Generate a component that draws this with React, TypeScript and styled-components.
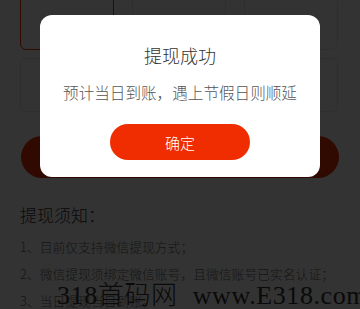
import React from 'react';
import styled, { createGlobalStyle } from 'styled-components';

const GlobalStyle = createGlobalStyle`
	html, body {
		margin: 0;
		padding: 0;
		background: #ffffff;
	}
	body {
		font-family: 'Noto Sans CJK SC', 'Noto Sans', sans-serif;
		font-weight: 300;
		overflow: hidden;
	}
`;

const Page = styled.div`
	position: relative;
	width: 360px;
	height: 309px;
	overflow: hidden;
	background: #ffffff;
	padding: 0 20px;
	box-sizing: border-box;
`;

const AmountGrid = styled.div`
	display: grid;
	grid-template-columns: repeat(3, 1fr);
	gap: 8px 18px;
	margin-top: -4px;
	padding-right: 2px;
`;

const AmountCard = styled.div<{ $active?: boolean }>`
	height: 54px;
	border: 1px solid ${(p) => (p.$active ? '#e8300a' : '#e6e6e6')};
	border-radius: 6px;
	box-sizing: border-box;
`;

const SubmitButton = styled.button`
	display: block;
	width: 318px;
	height: 42px;
	margin: 24px 0 0 1px;
	border: none;
	border-radius: 21px;
	background: #f03000;
`;

const NoticeTitle = styled.h3`
	margin: 25px 0 0;
	font-size: 17px;
	font-weight: 300;
	line-height: 24px;
	color: #333333;
`;

const NoticeList = styled.ol`
	list-style: none;
	margin: 6px 0 0;
	padding: 0;
`;

const NoticeItem = styled.li`
	font-size: 12.8px;
	line-height: 27px;
	color: #6a6a6a;
	white-space: nowrap;
`;

const Mask = styled.div`
	position: absolute;
	inset: 0;
	background: rgba(0, 0, 0, 0.8);
`;

const Dialog = styled.div`
	position: absolute;
	left: 40px;
	top: 15px;
	width: 280px;
	height: 162px;
	box-sizing: border-box;
	padding-top: 28px;
	background: #ffffff;
	border-radius: 12px;
	display: flex;
	flex-direction: column;
	align-items: center;
`;

const DialogTitle = styled.div`
	font-size: 18px;
	line-height: 24px;
	color: #333333;
`;

const DialogText = styled.div`
	margin-top: 14px;
	font-size: 15.6px;
	line-height: 22px;
	color: #555555;
	white-space: nowrap;
`;

const ConfirmButton = styled.button`
	margin-top: 21px;
	width: 140px;
	height: 36px;
	border: none;
	border-radius: 18px;
	background: #f02d00;
	color: #ffffff;
	font-family: 'Noto Sans CJK SC', sans-serif;
	font-weight: 300;
	font-size: 15px;
	padding: 0;
`;

const Watermark = styled.div`
	position: absolute;
	left: 57px;
	top: 283px;
	font-family: 'Liberation Serif', 'Noto Sans CJK SC', serif;
	font-size: 26px;
	font-weight: 300;
	line-height: 26px;
	letter-spacing: 0.6px;
	word-spacing: 8px;
	color: #0a0a0a;
	white-space: nowrap;
`;

const notices = [
	'1、目前仅支持微信提现方式；',
	'2、微信提现须绑定微信账号，且微信账号已实名认证；',
	'3、当日提现当日到账。',
];

export default function App() {
	return (
		<>
			<GlobalStyle />
			<Page>
				<AmountGrid>
					{[0, 1, 2, 3, 4, 5].map((i) => (
						<AmountCard key={i} $active={i === 0} />
					))}
				</AmountGrid>
				<SubmitButton />
				<NoticeTitle>提现须知：</NoticeTitle>
				<NoticeList>
					{notices.map((n) => (
						<NoticeItem key={n}>{n}</NoticeItem>
					))}
				</NoticeList>
				<Mask />
				<Dialog>
					<DialogTitle>提现成功</DialogTitle>
					<DialogText>预计当日到账，遇上节假日则顺延</DialogText>
					<ConfirmButton>确定</ConfirmButton>
				</Dialog>
				<Watermark>318首码网 www.E318.com</Watermark>
			</Page>
		</>
	);
}
